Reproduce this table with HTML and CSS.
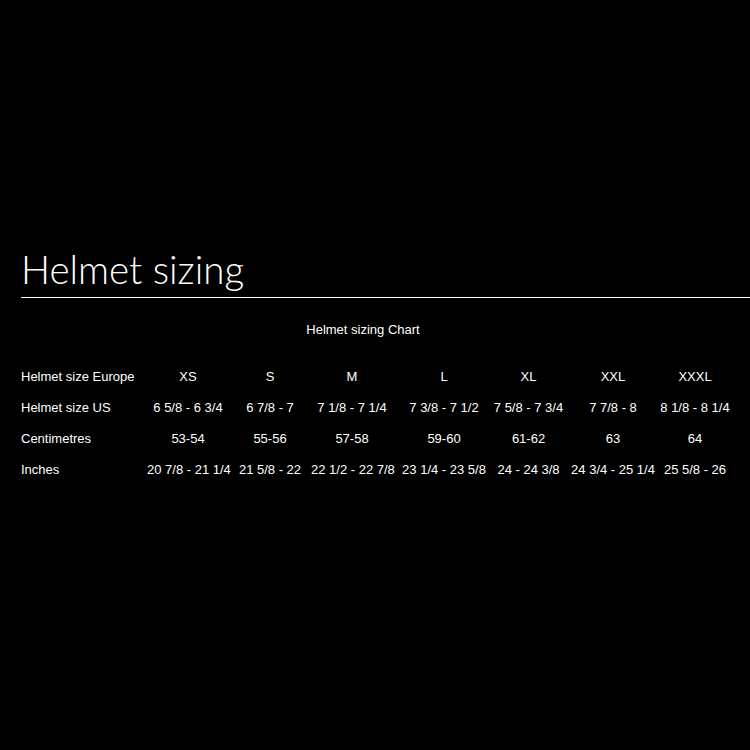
FILE: index.html
```html
<!DOCTYPE html>
<html>
<head>
<meta charset="utf-8">
<link rel="stylesheet" href="styles.css">
</head>
<body>
<div class="page">
  <h1 class="title">Helmet sizing</h1>
  <div class="rule"></div>
  <div class="caption">Helmet sizing Chart</div>
  <table class="chart">
    <colgroup>
      <col class="c-label"><col class="c1"><col class="c2"><col class="c3"><col class="c4"><col class="c5"><col class="c6"><col class="c7">
    </colgroup>
    <tr><td class="label">Helmet size Europe</td><td>XS</td><td>S</td><td>M</td><td>L</td><td>XL</td><td>XXL</td><td>XXXL</td></tr>
    <tr><td class="label">Helmet size US</td><td>6 5/8 - 6 3/4</td><td>6 7/8 - 7</td><td>7 1/8 - 7 1/4</td><td>7 3/8 - 7 1/2</td><td>7 5/8 - 7 3/4</td><td>7 7/8 - 8</td><td>8 1/8 - 8 1/4</td></tr>
    <tr><td class="label">Centimetres</td><td>53-54</td><td>55-56</td><td>57-58</td><td>59-60</td><td>61-62</td><td>63</td><td>64</td></tr>
    <tr><td class="label">Inches</td><td>20 7/8 - 21 1/4</td><td>21 5/8 - 22</td><td>22 1/2 - 22 7/8</td><td>23 1/4 - 23 5/8</td><td>24 - 24 3/8</td><td>24 3/4 - 25 1/4</td><td>25 5/8 - 26</td></tr>
  </table>
</div>
</body>
</html>
```
FILE: styles.css
```css
html, body {
  margin: 0;
  padding: 0;
  background: #000;
  color: #fff;
}
.page {
  padding: 241px 0 0 21px;
}
.title {
  margin: 0;
  font-family: "Lato", "Open Sans", sans-serif;
  font-weight: 300;
  font-size: 38.5px;
  line-height: 56px;
  color: #fff;
}
.rule {
  height: 1px;
  background: #fff;
}
.caption {
  font-family: "Liberation Sans", Arial, sans-serif;
  font-size: 13px;
  text-align: center;
  width: 684px;
  margin-top: 24px;
  line-height: 16px;
}
.chart {
  border-collapse: collapse;
  table-layout: fixed;
  width: 714px;
  margin-top: 23px;
  font-family: "Liberation Sans", Arial, sans-serif;
  font-size: 13px;
}
.chart td {
  padding: 0;
  height: 31px;
  text-align: center;
  white-space: nowrap;
  vertical-align: middle;
}
.chart td.label {
  text-align: left;
}
.chart td:nth-child(4) { padding-right: 4px; }
.chart td:nth-child(5) { padding-left: 5px; }
.c-label { width: 126px; }
.c1 { width: 82px; }
.c2 { width: 82px; }
.c3 { width: 86px; }
.c4 { width: 89px; }
.c5 { width: 85px; }
.c6 { width: 84px; }
.c7 { width: 80px; }
```
